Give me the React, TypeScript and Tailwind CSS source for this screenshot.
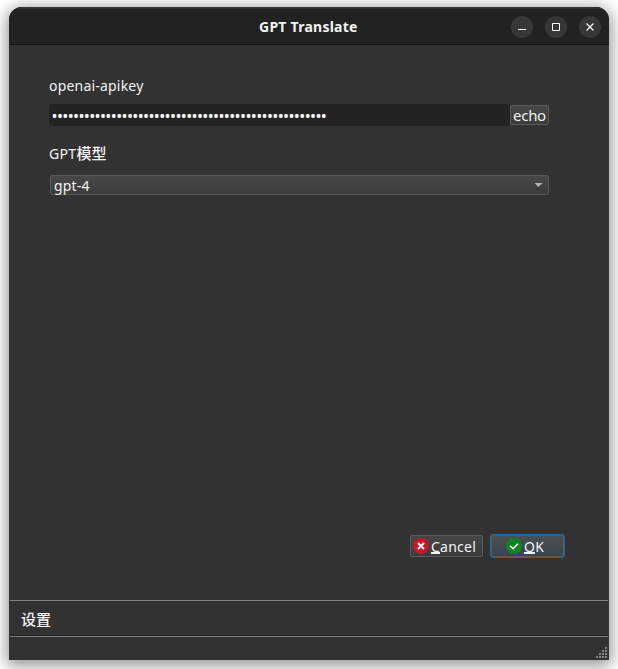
import type { ReactNode } from "react";

const apiKey = "•".repeat(51);
const grip = [
  [9, 0],
  [6, 3], [9, 3],
  [3, 6], [6, 6], [9, 6],
  [0, 9], [3, 9], [6, 9], [9, 9],
];

function WindowButton({ label, children }: { label: string; children: ReactNode }) {
  return (
    <button aria-label={label} className="size-[22px] rounded-full bg-[#373737]">
      <svg width="22" height="22" viewBox="0 0 22 22" fill="none" stroke="#fff">
        {children}
      </svg>
    </button>
  );
}

export default function App() {
  return (
    <div className="h-[669px] w-[618px] overflow-hidden bg-white pt-[7px] pl-[9px] font-['Noto_Sans','Noto_Sans_CJK_SC',sans-serif] text-[14px] leading-[20px] text-[#f3f3f3]">
      <div className="flex h-[653px] w-[600px] flex-col overflow-hidden rounded-t-[13px] bg-[#323232] shadow-[0_3px_16px_2px_rgba(0,0,0,0.45)]">
        <header className="flex h-[38px] shrink-0 items-center border-t-2 border-b border-t-[#353535] border-b-[#151515] bg-[#222222] pr-[8px]">
          <h1 className="w-[502px] pl-[250px] text-[14px] font-bold whitespace-nowrap">
            <span className="tracking-[0.25px]">GPT Translate</span>
          </h1>
          <div className="flex gap-[12px]">
            <WindowButton label="Minimize">
              <path d="M7 13.5h8" />
            </WindowButton>
            <WindowButton label="Maximize">
              <path d="M7.5 7.5h7v7h-7z" />
            </WindowButton>
            <WindowButton label="Close">
              <path d="m7.5 7.5 7 7m0-7-7 7" strokeWidth="1.2" />
            </WindowButton>
          </div>
        </header>

        <main className="flex h-[555px] shrink-0 flex-col pr-[44px] pl-[40px]">
          <label className="mt-[31px] h-[20px] tracking-[0.2px] whitespace-nowrap">openai-apikey</label>
          <div className="mt-[8px] flex h-[22px] w-[500px]">
            <div className="h-[22px] w-[461px] shrink-0 overflow-hidden rounded-[3px] bg-[#232323] pl-[2.5px] text-[16px] leading-[25px] tracking-[-0.63px] whitespace-nowrap">
              {apiKey}
            </div>
            <button className="mt-px h-[20px] w-[39px] rounded-[2px] border border-[#595959] bg-linear-to-b from-[#464646] to-[#3b3b3b] text-[15px] leading-[19px] tracking-[-0.3px]">
              echo
            </button>
          </div>
          <label className="mt-[18px] h-[20px] leading-[19px] tracking-[0.35px] whitespace-nowrap">
            GPT<span className="text-[15px] leading-none font-medium tracking-normal">模型</span>
          </label>
          <div className="mt-[11px] ml-px flex h-[20px] w-[499px] items-center justify-between rounded-[2px] border border-[#595959] bg-linear-to-b from-[#484848] to-[#3b3b3b] pr-[5px] pl-[3px]">
            <span className="pt-[2px] leading-[20px] tracking-[0.2px]">gpt-4</span>
            <svg width="9" height="5" viewBox="0 0 9 5" fill="#b3b3b3">
              <path d="M.5 0h8L4.5 4z" />
            </svg>
          </div>
          <div className="mt-auto mb-[42px] flex items-center justify-end gap-[7px]">
            <button className="flex h-[22px] w-[73px] items-center rounded-[2px] border border-[#5b5b5b] bg-linear-to-b from-[#464646] to-[#3b3b3b] pl-[2px]">
              <svg width="16" height="16" viewBox="0 0 16 16">
                <circle cx="8" cy="8" r="8" fill="#c7162b" />
                <path d="m5 5 6 6m0-6-6 6" stroke="#fff" strokeWidth="1.8" />
              </svg>
              <span className="ml-[2px] h-[20px] leading-[21px] tracking-[0.25px] whitespace-nowrap">
                <span className="inline-block h-[18px] border-b-2 border-[#f3f3f3]">C</span>ancel
              </span>
            </button>
            <button className="flex h-[24px] w-[75px] items-center rounded-[3px] border border-[#246b9b] bg-linear-to-b from-[#4a5054] to-[#3b444b] pl-[15px] shadow-[inset_0_0_0_1px_#4d5c65]">
              <svg width="16" height="16" viewBox="0 0 16 16">
                <circle cx="8" cy="8" r="8" fill="#0e8420" />
                <path d="m4 7.7 3 3 5-5" fill="none" stroke="#fff" strokeWidth="1.6" />
              </svg>
              <span className="ml-[2px] h-[20px] leading-[21px] tracking-[0.4px] whitespace-nowrap">
                <span className="inline-block h-[18px] border-b-2 border-[#f3f3f3]">O</span>K
              </span>
            </button>
          </div>
        </main>

        <section className="mx-px h-[37px] shrink-0 border-y border-[#808080] pl-[11px] text-[15px] leading-[37px] font-medium shadow-[inset_0_-1px_0_#252525]">
          设置
        </section>
        <footer className="flex flex-1 items-end justify-end pr-[2px] pb-[2px]">
          <svg width="11" height="11" viewBox="0 0 11 11" fill="#858585">
            {grip.map(([x, y]) => (
              <rect key={`${x}-${y}`} x={x} y={y} width="2" height="2" />
            ))}
          </svg>
        </footer>
      </div>
    </div>
  );
}
